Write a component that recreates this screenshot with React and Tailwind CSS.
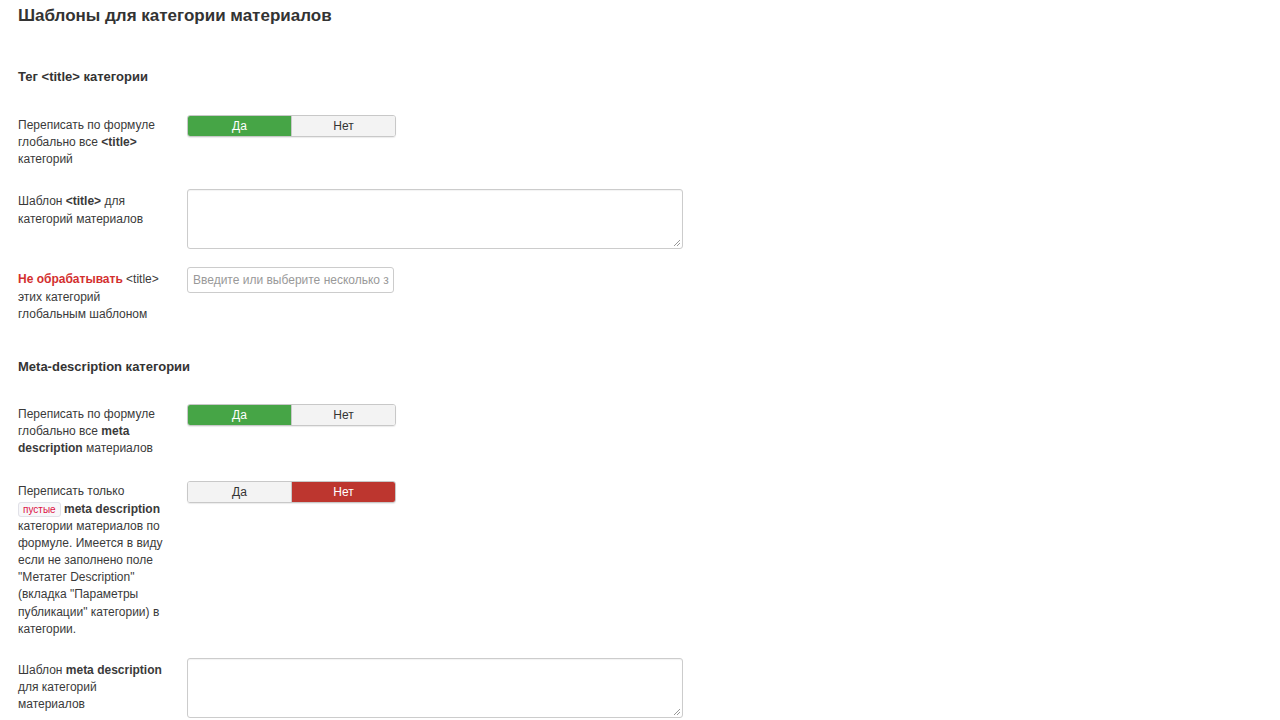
import React from "react";

function Toggle({ yes }) {
  return (
    <div className="flex w-[209px] h-[22px] rounded-[3px] overflow-hidden border border-[#c8c8c8] text-[12px] leading-[20px] shadow-[0_1px_1px_rgba(0,0,0,0.08)]">
      <div
        className={
          "flex-1 text-center border-r border-[#c8c8c8] " +
          (yes ? "bg-[#46a546] text-white" : "bg-[#f3f3f3] text-[#333]")
        }
      >
        Да
      </div>
      <div
        className={
          "flex-1 text-center " +
          (yes ? "bg-[#f3f3f3] text-[#333]" : "bg-[#bd362f] text-white")
        }
      >
        Нет
      </div>
    </div>
  );
}

function TextArea() {
  return (
    <div className="relative w-[496px] h-[60px] rounded-[3px] border border-[#cccccc] bg-white shadow-[inset_0_1px_1px_rgba(0,0,0,0.05)]">
      <svg className="absolute right-[1px] bottom-[1px]" width="8" height="8" viewBox="0 0 8 8">
        <path d="M7 1 L1 7 M7 4 L4 7" stroke="#999" strokeWidth="1" />
      </svg>
    </div>
  );
}

function Row({ label, children, pt = "pt-[2px] pb-[3px]" }) {
  return (
    <div className="flex mb-[18px]">
      <div className={"w-[147px] text-[12px] leading-[17.15px] text-[#3a3a3a] mr-[22px] " + pt}>
        {label}
      </div>
      <div>{children}</div>
    </div>
  );
}

export default function App() {
  return (
    <div className="bg-white w-[1280px] h-[720px] overflow-hidden pl-[18px] font-['Liberation_Sans',Arial,sans-serif] text-[#333]">
      <h2 className="text-[17px] font-bold leading-[20px] pt-[6px] text-[#333]">
        Шаблоны для категории материалов
      </h2>
      <h3 className="text-[13px] font-bold leading-[18px] mt-[42px] mb-[29px] text-[#333]">
        Тег &lt;title&gt; категории
      </h3>
      <Row
        label={
          <>
            Переписать по формуле глобально все <b>&lt;title&gt;</b> категорий
          </>
        }
      >
        <Toggle yes />
      </Row>
      <Row
        pt="pt-[4px] pb-[1px]"
        label={
          <>
            Шаблон <b>&lt;title&gt;</b> для категорий материалов
          </>
        }
      >
        <TextArea />
      </Row>
      <Row
        pt="pt-[4px] pb-[1px]"
        label={
          <>
            <b className="text-[#d32f2f]">Не обрабатывать</b> &lt;title&gt; этих категорий глобальным шаблоном
          </>
        }
      >
        <div className="w-[207px] h-[26px] rounded-[3px] border border-[#cccccc] bg-white px-[5px] text-[12px] leading-[24px] text-[#999] whitespace-nowrap overflow-hidden">
          Введите или выберите несколько з
        </div>
      </Row>
      <h3 className="text-[13px] font-bold leading-[18px] mt-[34px] mb-[28px] text-[#333]">
        Meta-description категории
      </h3>
      <Row
        label={
          <>
            Переписать по формуле глобально все <b>meta description</b> материалов
          </>
        }
      >
        <Toggle yes />
      </Row>
      <div className="h-[3px]" />
      <Row
        label={
          <>
            Переписать только{" "}
            <code className="font-['Liberation_Sans',Arial,sans-serif] text-[10px] leading-[12px] px-[4px] py-[1px] rounded-[3px] bg-[#f7f7f9] border border-[#e1e1e8] text-[#dd1144]">
              пустые
            </code>{" "}
            <b>meta description</b> категории материалов по формуле. Имеется в виду если не заполнено поле "Метатег Description" (вкладка "Параметры публикации" категории) в категории.
          </>
        }
      >
        <Toggle yes={false} />
      </Row>
      <div className="-mt-[1px]" />
      <Row
        pt="pt-[4px] pb-[1px]"
        label={
          <>
            Шаблон <b>meta description</b> для категорий материалов
          </>
        }
      >
        <TextArea />
      </Row>
    </div>
  );
}
